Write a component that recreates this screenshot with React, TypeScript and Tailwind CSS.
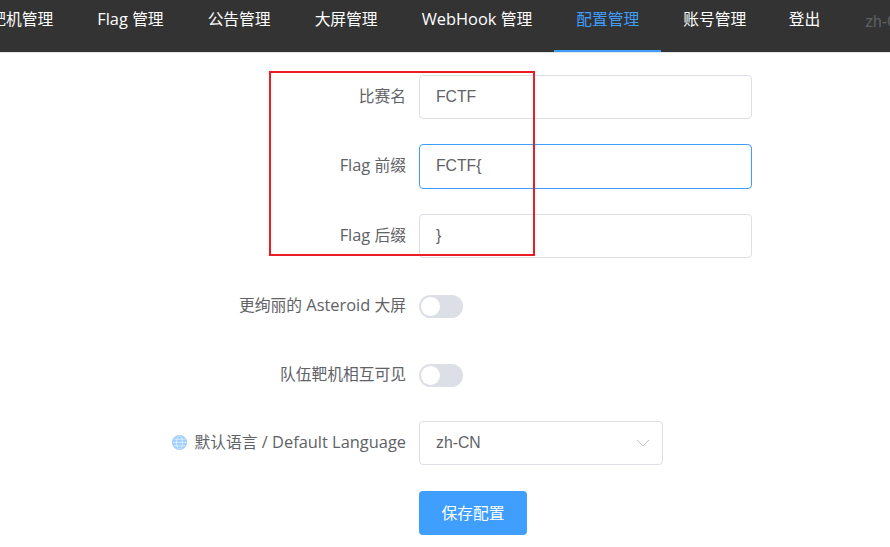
const navItems = ["靶机管理", "Flag 管理", "公告管理", "大屏管理", "WebHook 管理", "配置管理", "账号管理", "登出"];

const font = "font-['Open_Sans','Noto_Sans_CJK_SC',sans-serif]";
const inputFont = "font-['Liberation_Sans','Noto_Sans_CJK_SC',sans-serif]";

// latin runs come out a bit wider than the cjk ones in this page
function Mixed({ text }: { text: string }) {
  return (
    <>
      {text.split(/([\x20-\x7e]+)/).map((part, i) =>
        /[\x20-\x7e]/.test(part) ? (
          <span key={i} className="text-[16.4px]">
            {part}
          </span>
        ) : (
          part
        ),
      )}
    </>
  );
}

function Field({ label, value, focused, className }: { label: string; value: string; focused?: boolean; className?: string }) {
  return (
    <div className={`flex items-center ${focused ? "h-[45px]" : "h-[44px]"} ${className ?? ""}`}>
      <label className={`w-[406px] text-right text-[15.75px] text-[#606266] shrink-0 ${/[a-z]/i.test(label) ? "pb-[2px]" : ""}`}>
        <Mixed text={label} />
      </label>
      <div
        className={`ml-[13px] w-[333px] h-full flex items-center px-[16px] rounded-[4px] border text-[15.75px] text-[#606266] ${inputFont} ${
          focused ? "border-[#409eff] pb-[2px]" : "border-[#dcdfe6]"
        }`}
      >
        {value}
      </div>
    </div>
  );
}

function Toggle({ label, className }: { label: string; className?: string }) {
  return (
    <div className={`flex items-center h-[44px] ${className ?? ""}`}>
      <label className={`w-[406px] text-right text-[15.75px] text-[#606266] shrink-0 ${/[a-z]/i.test(label) ? "pb-[2px]" : ""}`}>
        <Mixed text={label} />
      </label>
      <div className="ml-[13px] w-[44px] h-[23px] rounded-full bg-[#dcdfe6] p-[2px]">
        <div className="w-[19px] h-[19px] rounded-full bg-white" />
      </div>
    </div>
  );
}

export default function App() {
  return (
    <div className={`relative w-[890px] h-[547px] overflow-hidden bg-white ${font}`}>
      {/* Top nav */}
      <div className="h-[53px] bg-[#333333] border-b border-[#e6e6e6] flex overflow-hidden">
        <div className="flex ml-[-31.75px] shrink-0">
          {navItems.map((item) => (
            <div
              key={item}
              className={`h-[52px] px-[22px] pt-[5px] text-[15.75px] leading-[28px] whitespace-nowrap border-b-2 ${
                item === "配置管理" ? "text-[#409eff] border-[#409eff]" : "text-white border-transparent"
              } ${item === "账号管理" ? "mr-[-1.5px]" : ""}`}
            >
              <Mixed text={item} />
            </div>
          ))}
          <div className={`h-[52px] pl-[23px] pt-[8px] text-[15.75px] leading-[28px] text-[#5f6062] ${inputFont}`}>zh-CN</div>
        </div>
      </div>

      {/* Config form */}
      <div className="flex flex-col pt-[22px]">
        <Field label="比赛名" value="FCTF" />
        <Field label="Flag 前缀" value="FCTF{" focused className="mt-[25px]" />
        <Field label="Flag 后缀" value="}" className="mt-[25px]" />
        <Toggle label="更绚丽的 Asteroid 大屏" className="mt-[26.5px]" />
        <Toggle label="队伍靶机相互可见" className="mt-[24.5px]" />
        <div className="flex items-center h-[44px] mt-[24px]">
          <label className="w-[406px] flex justify-end items-center gap-[8px] text-[15.75px] text-[#606266] shrink-0 pb-[2px]">
            <svg width="15" height="15" viewBox="0 0 16 16" fill="#9fd0ff" stroke="#e8f4ff" strokeWidth="0.8">
              <circle cx="8" cy="8" r="7.6" stroke="#8cc5ff" />
              <ellipse cx="8" cy="8" rx="3.2" ry="7.4" fill="none" />
              <path d="M0.6 8h14.8M2 4.4h12M2 11.6h12" fill="none" />
            </svg>
            <span>
              <Mixed text="默认语言 / Default Language" />
            </span>
          </label>
          <div className={`ml-[13px] w-[244px] h-[44px] flex items-center justify-between pl-[16px] pr-[12px] rounded-[4px] border border-[#dcdfe6] text-[15.75px] text-[#606266] ${inputFont}`}>
            zh-CN
            <svg width="14" height="14" viewBox="0 0 14 14" fill="none" stroke="#c0c4cc" strokeWidth="1">
              <path d="M1 4l6 6 6-6" />
            </svg>
          </div>
        </div>
        <div className="flex h-[44px] mt-[26px]">
          <button className="ml-[419px] w-[108px] h-[44px] pt-[1px] rounded-[4px] bg-[#409eff] text-white text-[15.75px]">保存配置</button>
        </div>
      </div>

      {/* Red annotation box */}
      <div className="absolute left-[269px] top-[71px] w-[266px] h-[185px] border-2 border-[#ed1c24]" />
    </div>
  );
}
